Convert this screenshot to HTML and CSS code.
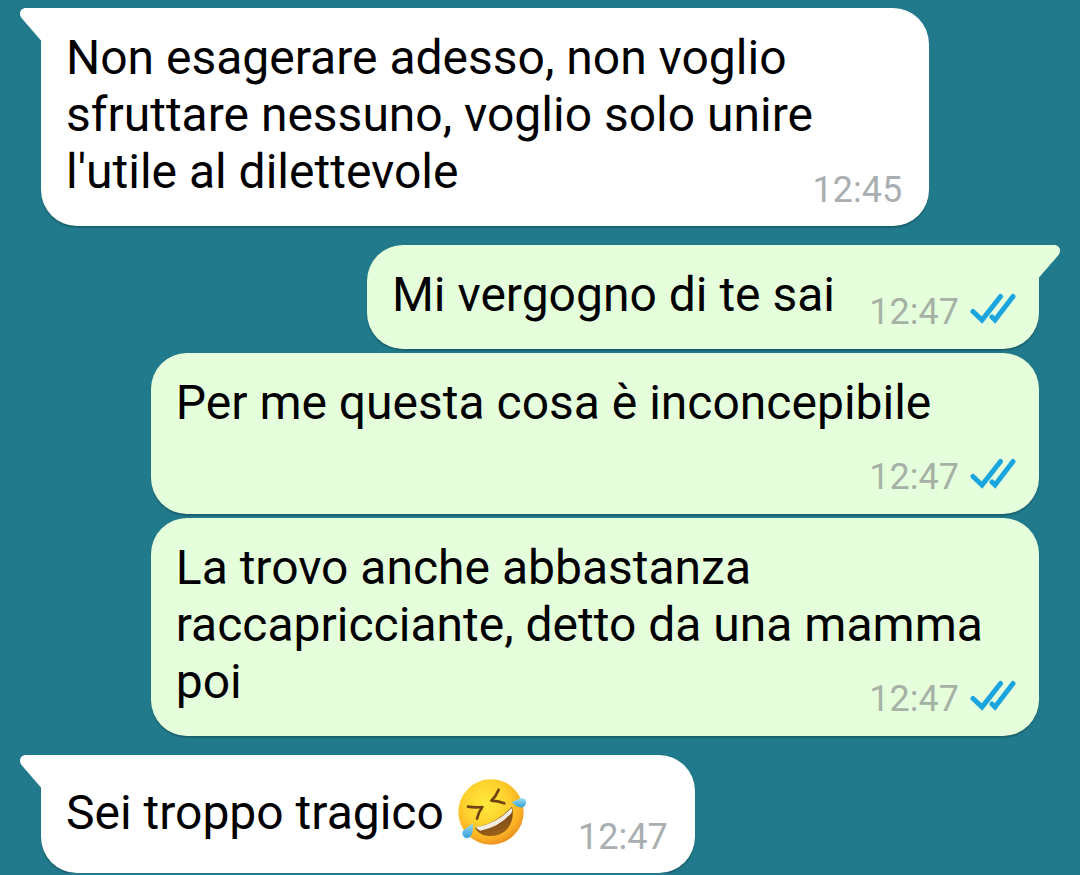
FILE: index.html
```html
<!DOCTYPE html>
<html lang="it">
<head>
<meta charset="utf-8">
<meta name="viewport" content="width=device-width, initial-scale=1">
<title>Chat</title>
<link rel="stylesheet" href="styles.css">
</head>
<body>
<svg class="defs" aria-hidden="true">
  <symbol id="tail" viewBox="0 0 22 33"><path d="M22 0H6C1 0-2 5 1.500 10L21 32.500H22Z"/></symbol>
  <symbol id="read" viewBox="0 0 46 32"><path d="M3 18.500 12 27 30.500 3.500M22 24 25 27 43 3.500"/></symbol>
</svg>
<main class="chat">
  <article class="bubble in first">
    <svg class="tail" aria-hidden="true"><use href="#tail"/></svg>
    <p class="text">Non esagerare adesso, non voglio sfruttare nessuno, voglio solo unire l'utile al dilettevole<span class="spacer"></span></p>
    <div class="meta"><time>12:45</time></div>
  </article>
  <article class="bubble out first">
    <svg class="tail" aria-hidden="true"><use href="#tail"/></svg>
    <p class="text">Mi vergogno di te sai<span class="spacer"></span></p>
    <div class="meta"><time>12:47</time><svg class="read" role="img" aria-label="Letto"><use href="#read"/></svg></div>
  </article>
  <article class="bubble out">
    <p class="text">Per me questa cosa è inconcepibile<span class="spacer"></span></p>
    <div class="meta"><time>12:47</time><svg class="read" role="img" aria-label="Letto"><use href="#read"/></svg></div>
  </article>
  <article class="bubble out">
    <p class="text">La trovo anche abbastanza raccapricciante, detto da una mamma poi<span class="spacer"></span></p>
    <div class="meta"><time>12:47</time><svg class="read" role="img" aria-label="Letto"><use href="#read"/></svg></div>
  </article>
  <article class="bubble in first">
    <svg class="tail" aria-hidden="true"><use href="#tail"/></svg>
    <p class="text">Sei troppo tragico <svg class="emoji" viewBox="48 30 210 213" role="img" aria-label="Faccina che si rotola dalle risate">
      <defs>
        <radialGradient id="face" cx=".42" cy=".36" r=".66">
          <stop offset="0" stop-color="#ffe93c"/><stop offset=".5" stop-color="#fed12d"/><stop offset=".82" stop-color="#fbb124"/><stop offset="1" stop-color="#ea8f20"/>
        </radialGradient>
        <linearGradient id="mouth" x1="0" y1="0" x2=".4" y2="1">
          <stop offset="0" stop-color="#5b3210"/><stop offset="1" stop-color="#99601a"/>
        </linearGradient>
        <linearGradient id="tear" x1="0" y1="0" x2="0" y2="1">
          <stop offset="0" stop-color="#9adcf5"/><stop offset="1" stop-color="#36a2d8"/>
        </linearGradient>
      </defs>
      <circle cx="153" cy="138" r="98" fill="url(#face)"/>
      <path d="M105 185Q172 172 216 122C225 160 208 197 174 207C145 215 116 207 105 185Z" fill="url(#mouth)"/>
      <path d="M108 184Q173 171 214 126Q218 131 215 140Q178 184 121 194Q111 192 108 184Z" fill="#f3ede2"/>
      <g fill="none" stroke="#70420f" stroke-width="8" stroke-linecap="round" stroke-linejoin="round">
        <path d="M84 122Q106 126 127 123Q116 137 111 158"/>
        <path d="M176 71Q168 91 154 104Q173 105 193 112"/>
      </g>
      <path d="M97 171C101 188 98 208 87 215C77 220 66 210 67 200C69 188 88 186 97 171Z" fill="url(#tear)"/>
      <path d="M215 108C230 105 235 96 247 97C258 98 261 109 256 117C246 132 229 122 215 108Z" fill="url(#tear)"/>
    </svg><span class="spacer"></span></p>
    <div class="meta"><time>12:47</time></div>
  </article>
</main>
</body>
</html>
```
FILE: styles.css
```css
* {
  box-sizing: border-box;
}

body {
  margin: 0;
  background: #207a8b;
  color: #000;
  font-family: Roboto, "Liberation Sans", sans-serif;
}

.defs {
  display: none;
}

.chat {
  display: flex;
  flex-direction: column;
  gap: 4px;
  padding: 8px 41px 0;
}

.bubble {
  position: relative;
  max-width: 89%;
  padding: 21px 26px 26px 25px;
  border-radius: 36px;
  box-shadow: 0 2px 1px rgba(0, 0, 0, 0.2);
}

.bubble.first:not(:first-child) {
  margin-top: 15px;
}

.in {
  align-self: flex-start;
  background: #fff;
}

.out {
  align-self: flex-end;
  background: #e5ffdc;
}

.in.first {
  border-top-left-radius: 0;
}

.out.first {
  border-top-right-radius: 0;
}

.tail {
  position: absolute;
  top: 0;
  left: -21px;
  width: 22px;
  height: 33px;
  fill: #fff;
}

.out .tail {
  left: auto;
  right: -21px;
  fill: #e5ffdc;
  transform: scaleX(-1);
}

.text {
  margin: 0;
  font-size: 48px;
  line-height: 57px;
}

/* Keeps the last line clear of the time stamp. */
.spacer {
  display: inline-block;
  width: 143px;
}

.out .spacer {
  width: 178px;
}

.meta {
  position: absolute;
  right: 27px;
  bottom: 18px;
  display: flex;
  align-items: center;
  gap: 11px;
  color: #a9afb1;
  font-size: 36px;
  line-height: 36px;
}

.out .meta {
  right: 23px;
  color: #a6b1a6;
}

.read {
  width: 46px;
  height: 32px;
  margin-bottom: 6px;
  fill: none;
  stroke: #1ba5de;
  stroke-width: 5;
  stroke-linecap: round;
}

.emoji {
  width: 70px;
  height: 71px;
  vertical-align: -18px;
}
```
